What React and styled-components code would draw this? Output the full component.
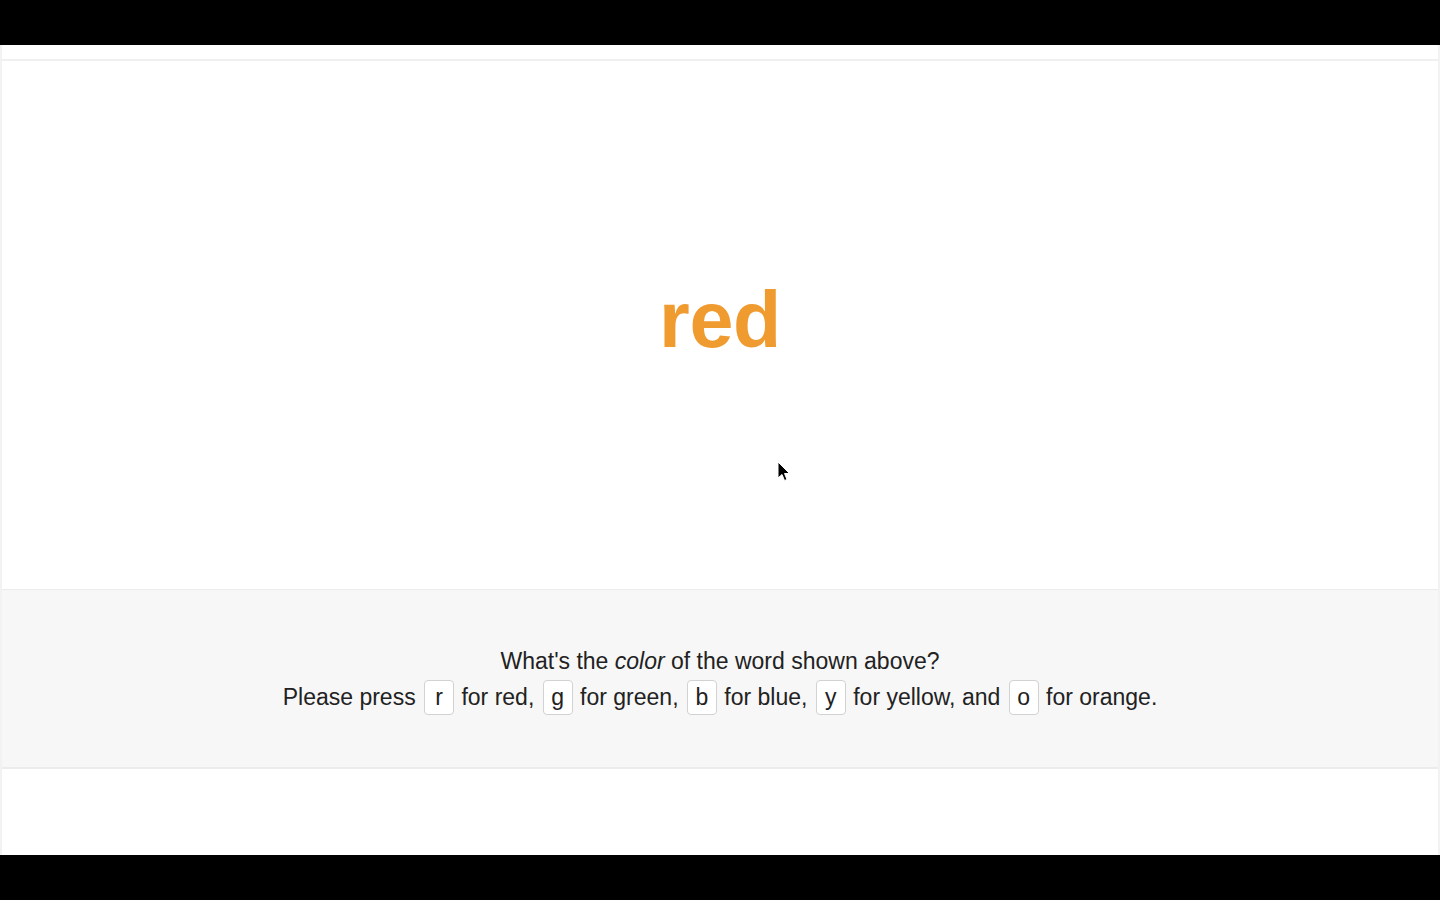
import React from "react";
import styled, { createGlobalStyle } from "styled-components";

const GlobalStyle = createGlobalStyle`
  html, body {
    margin: 0;
    padding: 0;
    background: #000;
  }
  body {
    font-family: "Liberation Sans", Arial, sans-serif;
  }
`;

const Screen = styled.div`
  width: 1440px;
  height: 900px;
  display: flex;
  flex-direction: column;
  background: #000;
  position: relative;
  overflow: hidden;
`;

const Letterbox = styled.div`
  height: ${(p) => p.h}px;
  flex: none;
  background: #000;
`;

const Frame = styled.div`
  flex: 1;
  display: flex;
  flex-direction: column;
  background: #fff;
  border-left: 2px solid #f2f2f2;
  border-right: 2px solid #f2f2f2;
`;

const TopStrip = styled.div`
  height: 14px;
  flex: none;
  border-bottom: 2px solid #efefef;
`;

const Stage = styled.div`
  flex: 1;
  display: flex;
  align-items: center;
  justify-content: center;
`;

const Word = styled.div`
  font-family: "Liberation Sans", Arial, sans-serif;
  font-weight: bold;
  font-size: 79px;
  line-height: 1;
  color: ${(p) => p.color};
  letter-spacing: -0.3px;
  margin-bottom: 11px;
`;

const Prompt = styled.div`
  height: 180px;
  flex: none;
  display: flex;
  flex-direction: column;
  align-items: center;
  justify-content: center;
  background: #f7f7f7;
  border-top: 1px solid #ececec;
  border-bottom: 2px solid #ececec;
  color: #222;
  font-size: 23px;
  line-height: 36px;
  box-sizing: border-box;
`;

const Line = styled.p`
  margin: 0;
  text-align: center;
`;

const Key = styled.span`
  display: inline-block;
  box-sizing: border-box;
  min-width: 30px;
  padding: 0 4px;
  height: 35px;
  line-height: 33px;
  margin: 0 1px 0 2px;
  background: #fff;
  border: 1px solid #d2d2d2;
  border-radius: 4px;
  vertical-align: baseline;
  text-align: center;
`;

const Footer = styled.div`
  height: 86px;
  flex: none;
`;

const Cursor = styled.svg`
  position: absolute;
  left: 777px;
  top: 461px;
  width: 14px;
  height: 22px;
`;

const keys = [
  ["r", "red"],
  ["g", "green"],
  ["b", "blue"],
  ["y", "yellow"],
  ["o", "orange"],
];

export default function App() {
  return (
    <>
      <GlobalStyle />
      <Screen>
        <Letterbox h={45} />
        <Frame>
          <TopStrip />
          <Stage>
            <Word color="#ef9b2f">red</Word>
          </Stage>
          <Prompt>
            <Line>
              What's the <em>color</em> of the word shown above?
            </Line>
            <Line>
              Please press{" "}
              {keys.map(([k, name], i) => (
                <React.Fragment key={k}>
                  <Key>{k}</Key> for {name}
                  {i < keys.length - 2 ? ", " : i === keys.length - 2 ? ", and " : "."}
                </React.Fragment>
              ))}
            </Line>
          </Prompt>
          <Footer />
        </Frame>
        <Letterbox h={45} />
        <Cursor viewBox="0 0 14 22">
          <path
            d="M1 1 L1 17 L5 13.5 L7.5 19.5 L10 18.5 L7.5 12.5 L12.5 12.5 Z"
            fill="#000"
            stroke="#fff"
            strokeWidth="1"
            strokeLinejoin="round"
          />
        </Cursor>
      </Screen>
    </>
  );
}
